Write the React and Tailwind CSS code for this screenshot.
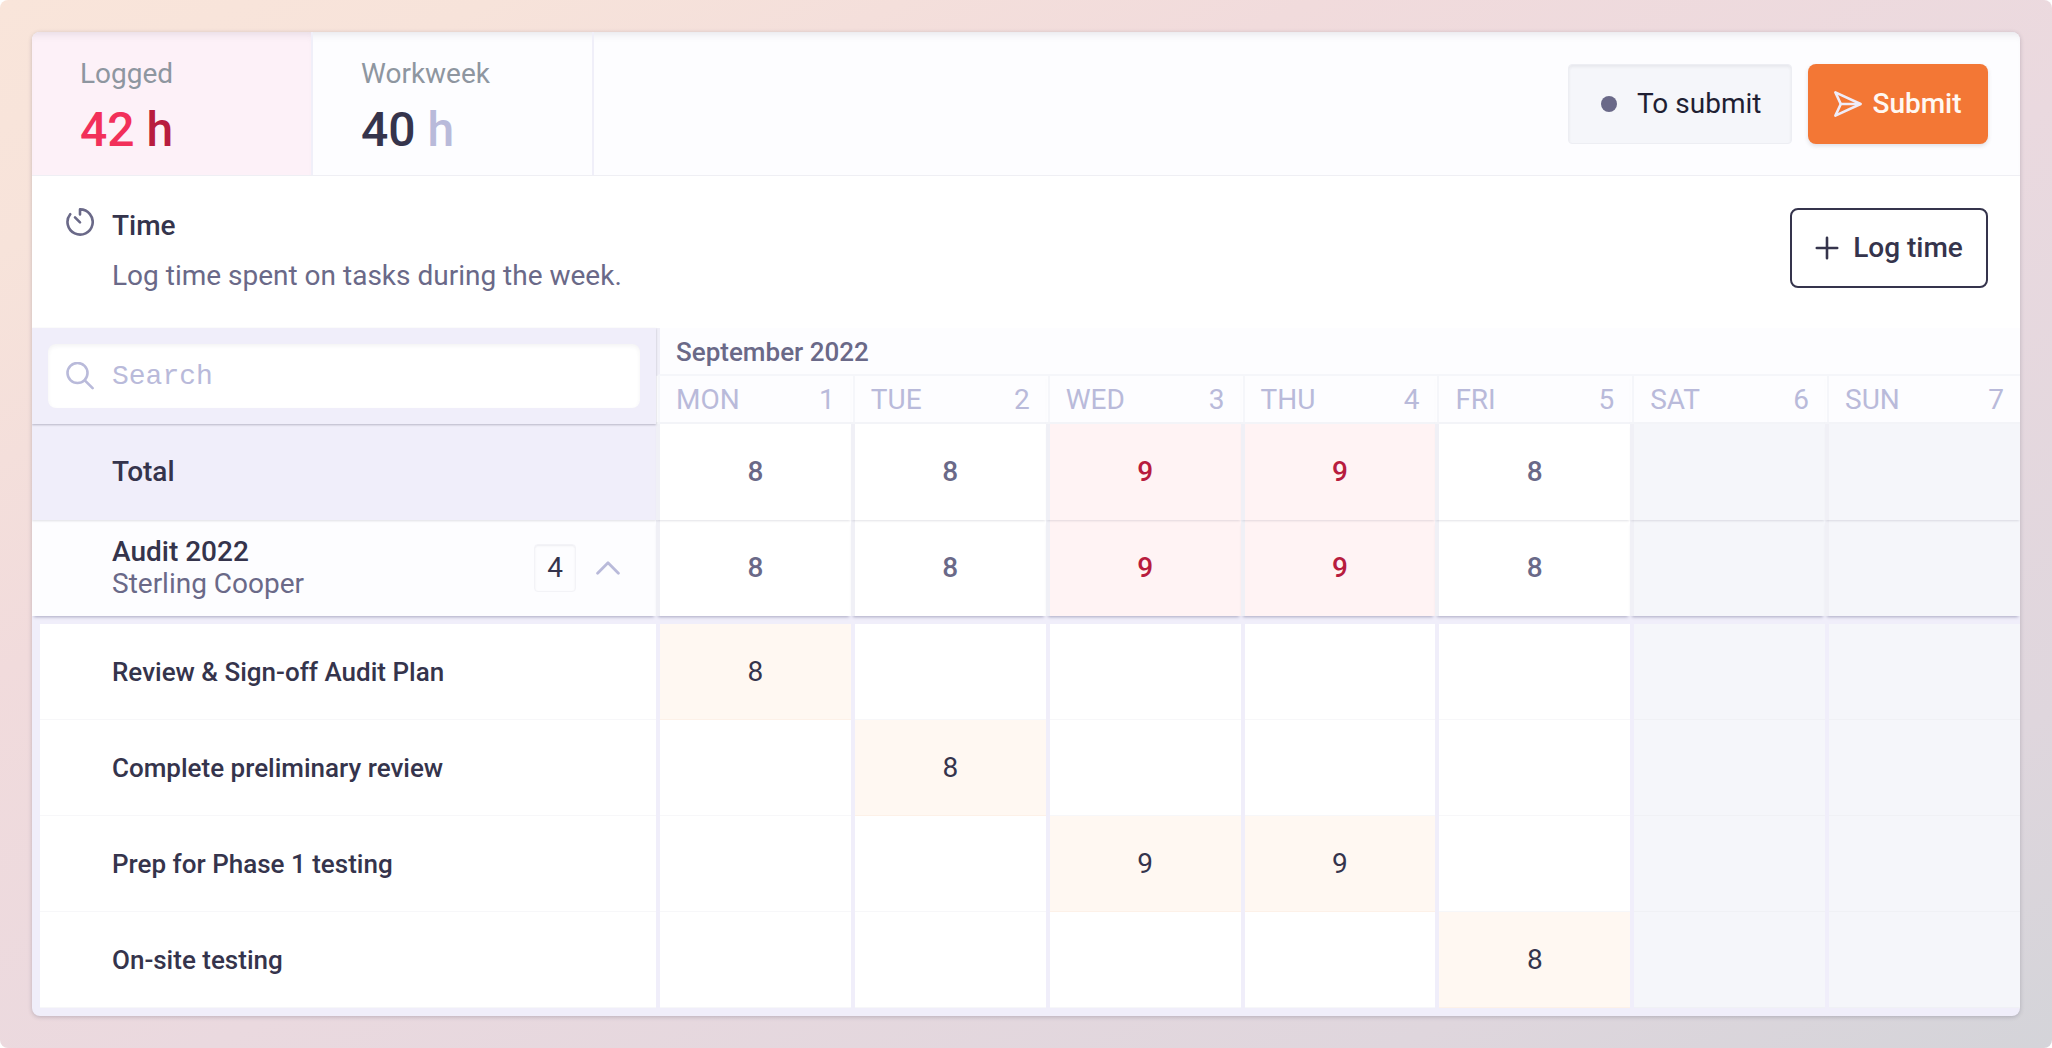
const DAYS = [
  { name: "MON", date: 1 },
  { name: "TUE", date: 2 },
  { name: "WED", date: 3 },
  { name: "THU", date: 4 },
  { name: "FRI", date: 5 },
  { name: "SAT", date: 6, weekend: true },
  { name: "SUN", date: 7, weekend: true },
];

const HOURS = [8, 8, 9, 9, 8, null, null];

const TASKS = [
  { name: "Review & Sign-off Audit Plan", hours: { 1: 8 } },
  { name: "Complete preliminary review", hours: { 2: 8 } },
  { name: "Prep for Phase 1 testing", hours: { 3: 9, 4: 9 } },
  { name: "On-site testing", hours: { 5: 8 } },
];

function TimerIcon() {
  return (
    <svg width="28" height="28" viewBox="0 0 28 28" fill="none" stroke="#6a6988" strokeWidth="2.6" strokeLinecap="round" strokeLinejoin="round" className="shrink-0" aria-hidden="true">
      <path d="M14 6.4V1.4A12.6 12.6 0 1 1 4.2 6.2" />
      <path d="M9 9.4l5 5" />
    </svg>
  );
}

function SendIcon() {
  return (
    <svg width="28" height="26" viewBox="0 0 28 26" fill="none" stroke="#efecf8" strokeWidth="2.6" strokeLinecap="round" strokeLinejoin="round" aria-hidden="true">
      <path d="M1.4 1.4L26.6 13 1.4 24.6 6.8 13z" />
      <path d="M6.8 13h19" />
    </svg>
  );
}

function PlusIcon() {
  return (
    <svg width="24" height="24" viewBox="0 0 24 24" fill="none" stroke="#35344c" strokeWidth="2.6" strokeLinecap="round" aria-hidden="true">
      <path d="M12 1.8v20.4M1.8 12h20.4" />
    </svg>
  );
}

function SearchIcon() {
  return (
    <svg width="28" height="28" viewBox="0 0 28 28" fill="none" stroke="#b9bada" strokeWidth="2.6" strokeLinecap="round" className="shrink-0" aria-hidden="true">
      <circle cx="11.5" cy="11" r="10" />
      <path d="M18.8 18.4l7.8 7.8" />
    </svg>
  );
}

function ChevronUpIcon() {
  return (
    <svg width="24" height="14" viewBox="0 0 24 14" fill="none" stroke="#b9bada" strokeWidth="2.8" strokeLinecap="round" strokeLinejoin="round" aria-hidden="true">
      <path d="M1.6 12.2L12 1.8l10.4 10.4" />
    </svg>
  );
}

function Stat({ label, value, cell, valueColor, unitColor }) {
  return (
    <div className={`w-[281px] border-r-2 border-[#f0eff9] pt-[22px] pb-[9px] pl-12 ${cell}`}>
      <div className="text-[28px] leading-10 text-[#8e96a0]">{label}</div>
      <div className={`flex gap-3 text-5xl leading-[72px] font-medium ${valueColor}`}>
        <span>{value}</span>
        <span className={unitColor}>h</span>
      </div>
    </div>
  );
}

function SummaryCells({ shadow }) {
  return HOURS.map((hours, i) => {
    const tone = hours === null ? "bg-[#f5f6fa]" : hours > 8 ? "bg-[#fff3f4] text-[#b81c3e]" : "bg-white text-[#6a6988]";
    return (
      <td key={i} className={`relative border-l-4 border-[#f0f0f6] text-center font-medium ${tone} ${shadow}`}>
        {hours}
      </td>
    );
  });
}

export default function App() {
  return (
    <div className="min-h-screen rounded-lg bg-[linear-gradient(to_bottom_right,#f9e5da_0%,#f7e3da_12%,#f1dbdc_32%,#ead9df_55%,#dfd6dd_84%,#d4d4d9_100%)] p-8 font-['Roboto',sans-serif] text-[28px] leading-8 text-[#35344c]">
      <main className="overflow-hidden rounded-lg bg-[#f0eefa] pb-2 shadow-[0_1px_4px_rgba(53,52,76,0.25)]">
        <header className="flex items-stretch border-b border-[#efeff4] bg-[#fdfdff] shadow-[inset_0_8px_8px_-6px_rgba(53,52,76,0.12)]">
          <Stat label="Logged" value="42" cell="bg-[#fdf1f8] shadow-[inset_0_8px_8px_-6px_rgba(53,52,76,0.12)]" valueColor="text-[#f2305a]" unitColor="text-[#b81c3e]" />
          <Stat label="Workweek" value="40" cell="" valueColor="text-[#35344c]" unitColor="text-[#b9bada]" />
          <div className="ml-auto flex items-center gap-4 pr-8">
            <div className="flex h-20 w-[224px] items-center gap-5 rounded border border-[#edeef3] bg-[#f5f6fa] pl-8 text-[#1f1f33] shadow-[inset_0_2px_3px_rgba(53,52,76,0.07)]">
              <span className="size-4 rounded-full bg-[#6a6988]" />
              To submit
            </div>
            <button type="button" className="flex h-20 w-[180px] items-center justify-center gap-2.5 rounded-lg bg-[#f37735] font-medium text-[#fff8f2] shadow-[0_2px_4px_rgba(53,52,76,0.15)]">
              <SendIcon />
              Submit
            </button>
          </div>
        </header>

        <section className="flex items-start justify-between bg-white p-8">
          <div className="flex gap-[18px] pl-0.5">
            <TimerIcon />
            <div className="flex flex-col gap-3">
              <h1 className="leading-9 font-medium">Time</h1>
              <p className="leading-10 text-[#6a6988]">Log time spent on tasks during the week.</p>
            </div>
          </div>
          <button type="button" className="flex h-20 w-[198px] items-center justify-center gap-3.5 rounded-lg border-2 border-[#35344c] bg-white font-medium">
            <PlusIcon />
            Log time
          </button>
        </section>

        <table className="w-full table-fixed border-separate border-spacing-0">
          <colgroup>
            <col className="w-[624px]" />
            {DAYS.map((day) => (
              <col key={day.name} />
            ))}
          </colgroup>
          <thead>
            <tr className="h-12">
              <th rowSpan={2} className="relative z-30 bg-[#f0eefa] p-4 shadow-[0_1px_2px_rgba(53,52,76,0.3)]">
                <label className="flex h-16 items-center gap-[18px] rounded-lg bg-white px-[18px] shadow-[inset_0_2px_4px_rgba(53,52,76,0.06)]">
                  <SearchIcon />
                  <input type="search" placeholder="Search" aria-label="Search tasks" className="w-full bg-transparent pt-0.5 font-['Liberation_Mono',monospace] font-normal outline-none placeholder:text-[#b9bada]" />
                </label>
              </th>
              <th colSpan={7} className="border-b-2 border-l-4 border-b-[#f5f6fa] border-l-[#f0eff8] bg-[#fdfdff] pt-0.5 pb-0 pl-4 text-left text-[26px] font-medium text-[#6a6988]">
                September 2022
              </th>
            </tr>
            <tr className="h-12 bg-[#fdfdff]">
              {DAYS.map((day) => (
                <th key={day.name} scope="col" className="relative border-b-2 border-[#f3f4f8] p-0 pl-0.5 font-normal text-[#b9bada] shadow-[0_2px_2px_-1px_rgba(53,52,76,0.1)]">
                  <div className="flex h-[46px] items-center justify-between border-l-2 border-[#f5f6fa] px-4 pt-0.5">
                    <span>{day.name}</span>
                    <span>{day.date}</span>
                  </div>
                </th>
              ))}
            </tr>
          </thead>
          <tbody>
            <tr className="h-24">
              <th scope="row" className="relative z-20 bg-[#f0eefa] pl-20 text-left font-medium shadow-[0_1px_2px_rgba(53,52,76,0.15)]">
                Total
              </th>
              <SummaryCells shadow="z-20 shadow-[0_2px_2px_-1px_rgba(53,52,76,0.14)]" />
            </tr>
            <tr className="h-24">
              <th scope="row" className="relative z-10 bg-[#fdfdff] py-0 pr-9 pl-20 text-left font-normal shadow-[0_3px_3px_-2px_rgba(83,82,126,0.45)]">
                <div className="flex items-center">
                  <div className="flex-1">
                    <div className="font-medium">Audit 2022</div>
                    <div className="text-[#6a6988]">Sterling Cooper</div>
                  </div>
                  <span className="flex h-12 w-[42px] items-center justify-center rounded border border-[#f3f3f7] shadow-[inset_0_1px_2px_rgba(53,52,76,0.08)]">4</span>
                  <button type="button" aria-label="Collapse Audit 2022" className="ml-5">
                    <ChevronUpIcon />
                  </button>
                </div>
              </th>
              <SummaryCells shadow="z-10 shadow-[0_3px_3px_-2px_rgba(83,82,126,0.45)]" />
            </tr>
            {TASKS.map((task, row) => (
              <tr key={task.name} className={row === 0 ? "h-[104px]" : "h-24"}>
                <th scope="row" className={`border-l-8 border-[#f0eefa] bg-white pl-[72px] text-left text-[26px] font-medium shadow-[inset_0_-1px_0_#f7f7f9] ${row === 0 ? "border-t-8" : ""}`}>
                  {task.name}
                </th>
                {DAYS.map((day) => {
                  const hours = task.hours[day.date];
                  const tone = hours ? "bg-[#fff8f2] shadow-[inset_0_-1px_0_#fdf1e8]" : day.weekend ? "bg-[#f5f6fa] shadow-[inset_0_-1px_0_#f0f1f5]" : "bg-white shadow-[inset_0_-1px_0_#f7f7f9]";
                  return (
                    <td key={day.name} className={`border-l-4 border-[#f0eefa] text-center ${tone} ${row === 0 ? "border-t-8" : ""}`}>
                      {hours}
                    </td>
                  );
                })}
              </tr>
            ))}
          </tbody>
        </table>
      </main>
    </div>
  );
}
